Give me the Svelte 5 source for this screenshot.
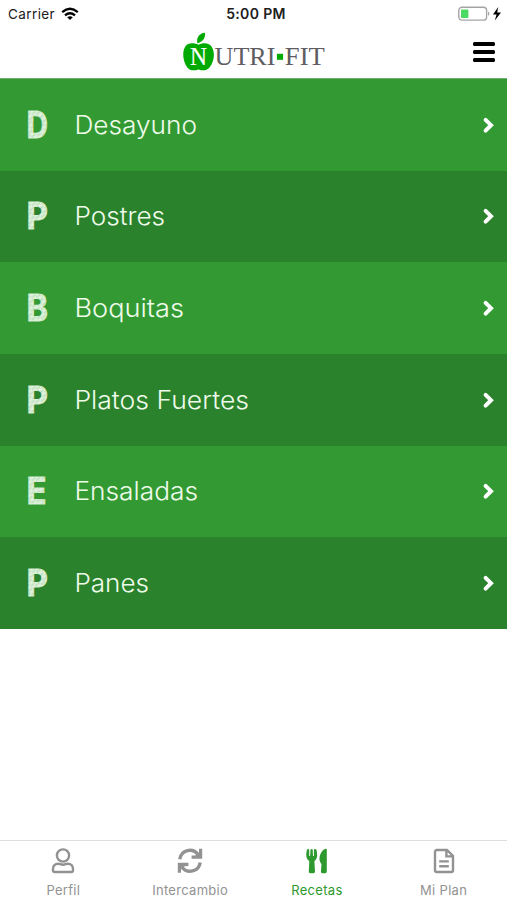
<script>
  const categories = [
    { letter: 'D', name: 'Desayuno', width: 121 },
    { letter: 'P', name: 'Postres', width: 89 },
    { letter: 'B', name: 'Boquitas', width: 108 },
    { letter: 'P', name: 'Platos Fuertes', width: 173 },
    { letter: 'E', name: 'Ensaladas', width: 122 },
    { letter: 'P', name: 'Panes', width: 73 }
  ];

  const tabs = [
    { id: 'profile', label: 'Perfil' },
    { id: 'exchange', label: 'Intercambio' },
    { id: 'recipes', label: 'Recetas' },
    { id: 'plan', label: 'Mi Plan' }
  ];

  let active = $state('recipes');
</script>

<div class="screen">
  <div class="status">
    <div class="carrier">
      <span>Carrier</span>
      <svg width="18" height="14" viewBox="0 0 18 14">
        <g fill="none" stroke="#000" stroke-width="2.3">
          <path d="M1.2 5.2Q9 -1.6 16.8 5.2" />
          <path d="M4 8.3Q9 4.1 14 8.3" />
        </g>
        <path d="M6.2 10.2Q9 8.1 11.8 10.2L9 13Z" />
      </svg>
    </div>
    <strong>5:00 PM</strong>
    <div class="power">
      <svg width="44" height="16" viewBox="0 0 44 16">
        <rect x=".8" y="1.3" width="27.8" height="12.8" rx="3.2" fill="#fff" stroke="#a5a5a5" stroke-width="1.4" />
        <rect x="3" y="3.6" width="7.4" height="8.4" rx=".8" fill="#4cd964" />
        <path d="M30 5.2Q33 7.6 30 10Z" fill="#a5a5a5" />
        <path d="M40.2 1L35 8.4H38.6L36.8 14.4L43 6.4H39.2Z" fill="#000" />
      </svg>
    </div>
  </div>

  <header>
    <svg class="logo" width="146" height="42" viewBox="0 0 146 42">
      <path fill="#0a0" d="M16.5 12.8C12 10.6 5.5 10.5 3 15C-.3 20.5 1.3 30.5 5.3 35.5C8.3 39.5 12.5 38.4 16.4 37.4C20.5 38.8 24.5 39 27.5 35.5C32 30 33.3 21.5 30.2 15.7C27.6 10.5 21 10.5 16.5 12.8Z" />
      <path fill="#0a0" d="M15.3 11.3C14.3 5 17.5 1.3 23 .8C23.8 5.8 20.5 10.2 15.3 11.3Z" />
      <text x="8" y="33.3" font-size="25" textLength="17" lengthAdjust="spacingAndGlyphs" fill="#fff" stroke="#fff" stroke-width=".2">N</text>
      <text x="32.5" y="33.2" font-size="24.5" textLength="61" lengthAdjust="spacingAndGlyphs" fill="#5f5d62">UTRI</text>
      <rect x="94.9" y="21.8" width="6.2" height="6" fill="#0a0" />
      <text x="102.8" y="33.2" font-size="24.5" textLength="40" lengthAdjust="spacingAndGlyphs" fill="#5f5d62">FIT</text>
    </svg>
    <button class="menu" aria-label="Menu"><i></i><i></i><i></i></button>
  </header>

  <main>
    {#each categories as category}
      <button class="row">
        <svg class="letter" width="30" height="50" viewBox="-1 -10 30 50" aria-hidden="true">
          <defs>
            <pattern id="chalk" width="9" height="5" patternUnits="userSpaceOnUse" patternTransform="rotate(-38)">
              <rect width="9" height="5" fill="#dcf0da" />
              <path d="M0 1H5M4 3.6H9" stroke="#a9d5a8" stroke-width=".8" />
            </pattern>
          </defs>
          <text x="-1.6" y="28" textLength={category.letter === 'E' ? 20 : 21.5} lengthAdjust="spacingAndGlyphs" fill="url(#chalk)" stroke="url(#chalk)" stroke-width=".9">{category.letter}</text>
        </svg>
        <svg class="name" width="190" height="36" viewBox="0 0 190 36">
          <text x="-.6" y="27.2" textLength={category.width + 1.6} lengthAdjust="spacingAndGlyphs">{category.name}</text>
        </svg>
        <svg class="chevron" width="14" height="18" viewBox="0 0 14 18">
          <path d="M3.6 3.8L9 9.2L3.6 14.6" fill="none" stroke="#fff" stroke-width="4" stroke-linecap="round" />
        </svg>
      </button>
    {/each}
  </main>

  <nav>
    {#each tabs as tab}
      <button class="tab" class:active={tab.id === active} onclick={() => (active = tab.id)}>
        <svg width="26" height="26" viewBox="0 0 26 26">
          {#if tab.id === 'profile'}
            <g fill="none" stroke="currentColor" stroke-width="2.4">
              <circle cx="13" cy="7.5" r="6.1" />
              <path d="M8.2 15.7C10.2 15.7 10.5 16.7 13 16.7S15.8 15.7 17.8 15.7C21 15.7 23 18 23 20.8V22.2Q23 24 21.2 24H4.8Q3 24 3 22.2V20.8C3 18 5 15.7 8.2 15.7Z" />
            </g>
          {:else if tab.id === 'exchange'}
            <path d="M2.8 11.2C4.2 1.8 15.5-.8 21.5 6.9M23.2 14.4C21.8 23.8 10.5 26.4 4.5 18.7" fill="none" stroke="currentColor" stroke-width="3.4" />
            <path fill="currentColor" d="M22 .8H25.2V10.8H14.6V7.6L18 7.4L22 5ZM4 24.8H.8V14.8H11.4V18L8 18.2L4 20.6Z" />
          {:else if tab.id === 'recipes'}
            <path fill="currentColor" d="M3 1.5Q4.5 .3 5.2 1.6V8H6.1L6.5 1.5Q7.5 .5 8.7 1.5L9 8H9.9V1.6Q11 .3 12.4 1.5C13.4 6 14.1 10.6 10.4 13L11 23.5Q11 25.2 9.5 25.2H6.2Q4.7 25.2 4.8 23.5L5.3 13C1.5 10.7 2 6 3 1.5ZM22.8 1.6V23.6Q22.8 25.2 21.2 25.2H18.4Q16.8 25.2 16.9 23.6L17.5 16C14.7 13.4 15 8 17.4 4.3Q19 1.5 21.4 .7Q22.8 .5 22.8 1.6Z" />
          {:else}
            <g fill="none" stroke="currentColor" stroke-width="2.4">
              <path d="M6 2H16L22 8V22.2Q22 24 20.2 24H5.8Q4 24 4 22.2V4Q4 2 6 2ZM15.4 2V8.4H22" />
              <path d="M8.2 13.4H17.8M8.2 18.2H17.8" />
            </g>
          {/if}
        </svg>
        <span>{tab.label}</span>
      </button>
    {/each}
  </nav>
</div>

<style>
  :global(body) {
    margin: 0;
    background: #fff;
  }

  .screen {
    display: flex;
    flex-direction: column;
    height: 900px;
    overflow: hidden;
    font-family: Inter, sans-serif;
  }

  button {
    border: 0;
    background: none;
    font-family: inherit;
  }

  .status {
    display: grid;
    grid-template-columns: 1fr auto 1fr;
    align-items: center;
    box-sizing: border-box;
    height: 27px;
    padding: 0 5px 0 8px;
    font-size: 13.5px;
    color: #202020;
  }

  .status strong {
    padding-left: 2px;
    font-weight: 600;
    font-size: 14px;
    letter-spacing: 0.35px;
  }

  .carrier {
    display: flex;
    align-items: center;
    gap: 6px;
    letter-spacing: 0.4px;
  }

  .carrier svg,
  .power svg {
    display: block;
  }

  .power {
    justify-self: end;
  }

  header {
    display: grid;
    grid-template-columns: 1fr auto 1fr;
    box-sizing: border-box;
    height: 52px;
    padding-top: 5px;
    border-bottom: 1px solid #70ac70;
  }

  .logo {
    grid-column: 2;
    display: block;
    margin-left: 3px;
    font-family: 'Liberation Serif', serif;
  }

  .menu {
    display: flex;
    flex-direction: column;
    justify-self: end;
    gap: 4px;
    width: 22px;
    margin: 10px 12px 0 0;
    padding: 0;
  }

  .menu i {
    height: 4px;
    border-radius: 1.5px;
    background: #000;
  }

  main {
    display: grid;
    grid-template-rows: repeat(6, 1fr);
    height: 550px;
  }

  .row {
    display: flex;
    align-items: center;
    padding: 0 11px 0 27px;
    background: #339a33;
  }

  .row:nth-child(even) {
    background: #2a822c;
  }

  .letter {
    overflow: visible;
    font-size: 37.5px;
    font-weight: 700;
  }

  .name {
    margin-left: 18px;
    overflow: visible;
    font-size: 25px;
    font-weight: 300;
    fill: #effbea;
  }

  .chevron {
    margin-left: auto;
  }

  nav {
    display: grid;
    grid-template-columns: repeat(4, 1fr);
    box-sizing: border-box;
    height: 60px;
    margin-top: auto;
    border-top: 1px solid #dedede;
  }

  .tab {
    display: flex;
    flex-direction: column;
    align-items: center;
    gap: 7px;
    padding: 7px 0 0;
    color: #929292;
    font-size: 13px;
    line-height: 18px;
    letter-spacing: 0.3px;
  }

  .tab.active {
    color: #2e992e;
  }
</style>
